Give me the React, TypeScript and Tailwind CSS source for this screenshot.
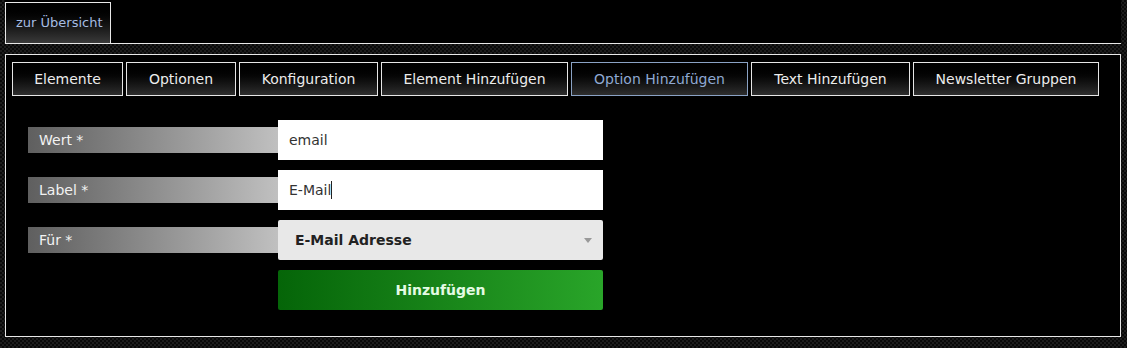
import { useState } from 'react';

const tabs = [
  { label: 'Elemente', width: 'w-[111px]' },
  { label: 'Optionen', width: 'w-[110px]' },
  { label: 'Konfiguration', width: 'w-[139px]' },
  { label: 'Element Hinzufügen', width: 'w-[187px]' },
  { label: 'Option Hinzufügen', width: 'w-[177px]', active: true },
  { label: 'Text Hinzufügen', width: 'w-[159px]' },
  { label: 'Newsletter Gruppen', width: 'w-[186px]' },
];

function FieldLabel({ text }: { text: string }) {
  return (
    <div className="w-[250px] h-[26px] flex items-center pl-[11px] text-[14px] text-[#f2f2f2] bg-gradient-to-r from-[#5f5f5f] to-[#c0c0c0]">
      {text}
    </div>
  );
}

export default function App() {
  const [wert, setWert] = useState('email');
  const label = 'E-Mail';

  return (
    <div className="min-h-[348px] w-full bg-[repeating-conic-gradient(#1d1d1d_0%_25%,#090909_0%_50%)] bg-[length:4px_4px] font-['DejaVu_Sans',Verdana,sans-serif] pb-3">
      {/* Header */}
      <div className="ml-[5px] mr-[6px] pt-[2px] bg-black border-b border-[#e8e8e8] flex">
        <button className="w-[106px] h-[41px] pl-[10px] text-left border-l border-t border-r border-[#e8e8e8] bg-gradient-to-b from-[#000] to-[#3a3a3a] text-[13px] text-[#a6bde2]">
          zur Übersicht
        </button>
      </div>

      {/* Panel */}
      <div className="ml-[5px] mr-[6px] mt-[10px] h-[283px] bg-black border border-[#e8e8e8] pt-[7px] pl-[6px]">
        <div className="flex gap-[3px]">
          {tabs.map((t) => (
            <button
              key={t.label}
              className={`${t.width} h-[34px] border text-[14px] bg-gradient-to-b from-[#000] to-[#2e2e2e] ${
                t.active ? 'border-[#8aa2c4] text-[#8fa9d3]' : 'border-[#e6e6e6] text-[#ececec]'
              }`}
            >
              {t.label}
            </button>
          ))}
        </div>

        <div className="mt-[24px] ml-[16px] flex flex-col gap-[10px]">
          <div className="flex items-center">
            <FieldLabel text="Wert *" />
            <input
              value={wert}
              onChange={(e) => setWert(e.target.value)}
              className="w-[325px] h-[40px] bg-white pl-[11px] pr-[10px] text-[14px] text-[#333] outline-none"
            />
          </div>
          <div className="flex items-center">
            <FieldLabel text="Label *" />
            <div className="w-[325px] h-[40px] bg-white pl-[11px] pr-[10px] flex items-center text-[14px] text-[#333]">
              {label}
              <span className="w-px h-[18px] bg-[#222]" />
            </div>
          </div>
          <div className="flex items-center">
            <FieldLabel text="Für *" />
            <div className="w-[325px] h-[40px] bg-[#e8e8e8] rounded-[2px] pl-[17px] pr-[11px] flex items-center justify-between">
              <span className="text-[14px] font-bold text-[#222]">E-Mail Adresse</span>
              <svg width="8" height="5" viewBox="0 0 8 5">
                <path d="M0 0h8L4 5z" fill="#999" />
              </svg>
            </div>
          </div>
          <div className="flex">
            <div className="w-[250px]" />
            <button className="w-[325px] h-[40px] rounded-[2px] bg-gradient-to-r from-[#056508] to-[#29a529] text-[14px] font-bold text-[#e4fbe4]">
              Hinzufügen
            </button>
          </div>
        </div>
      </div>
    </div>
  );
}
